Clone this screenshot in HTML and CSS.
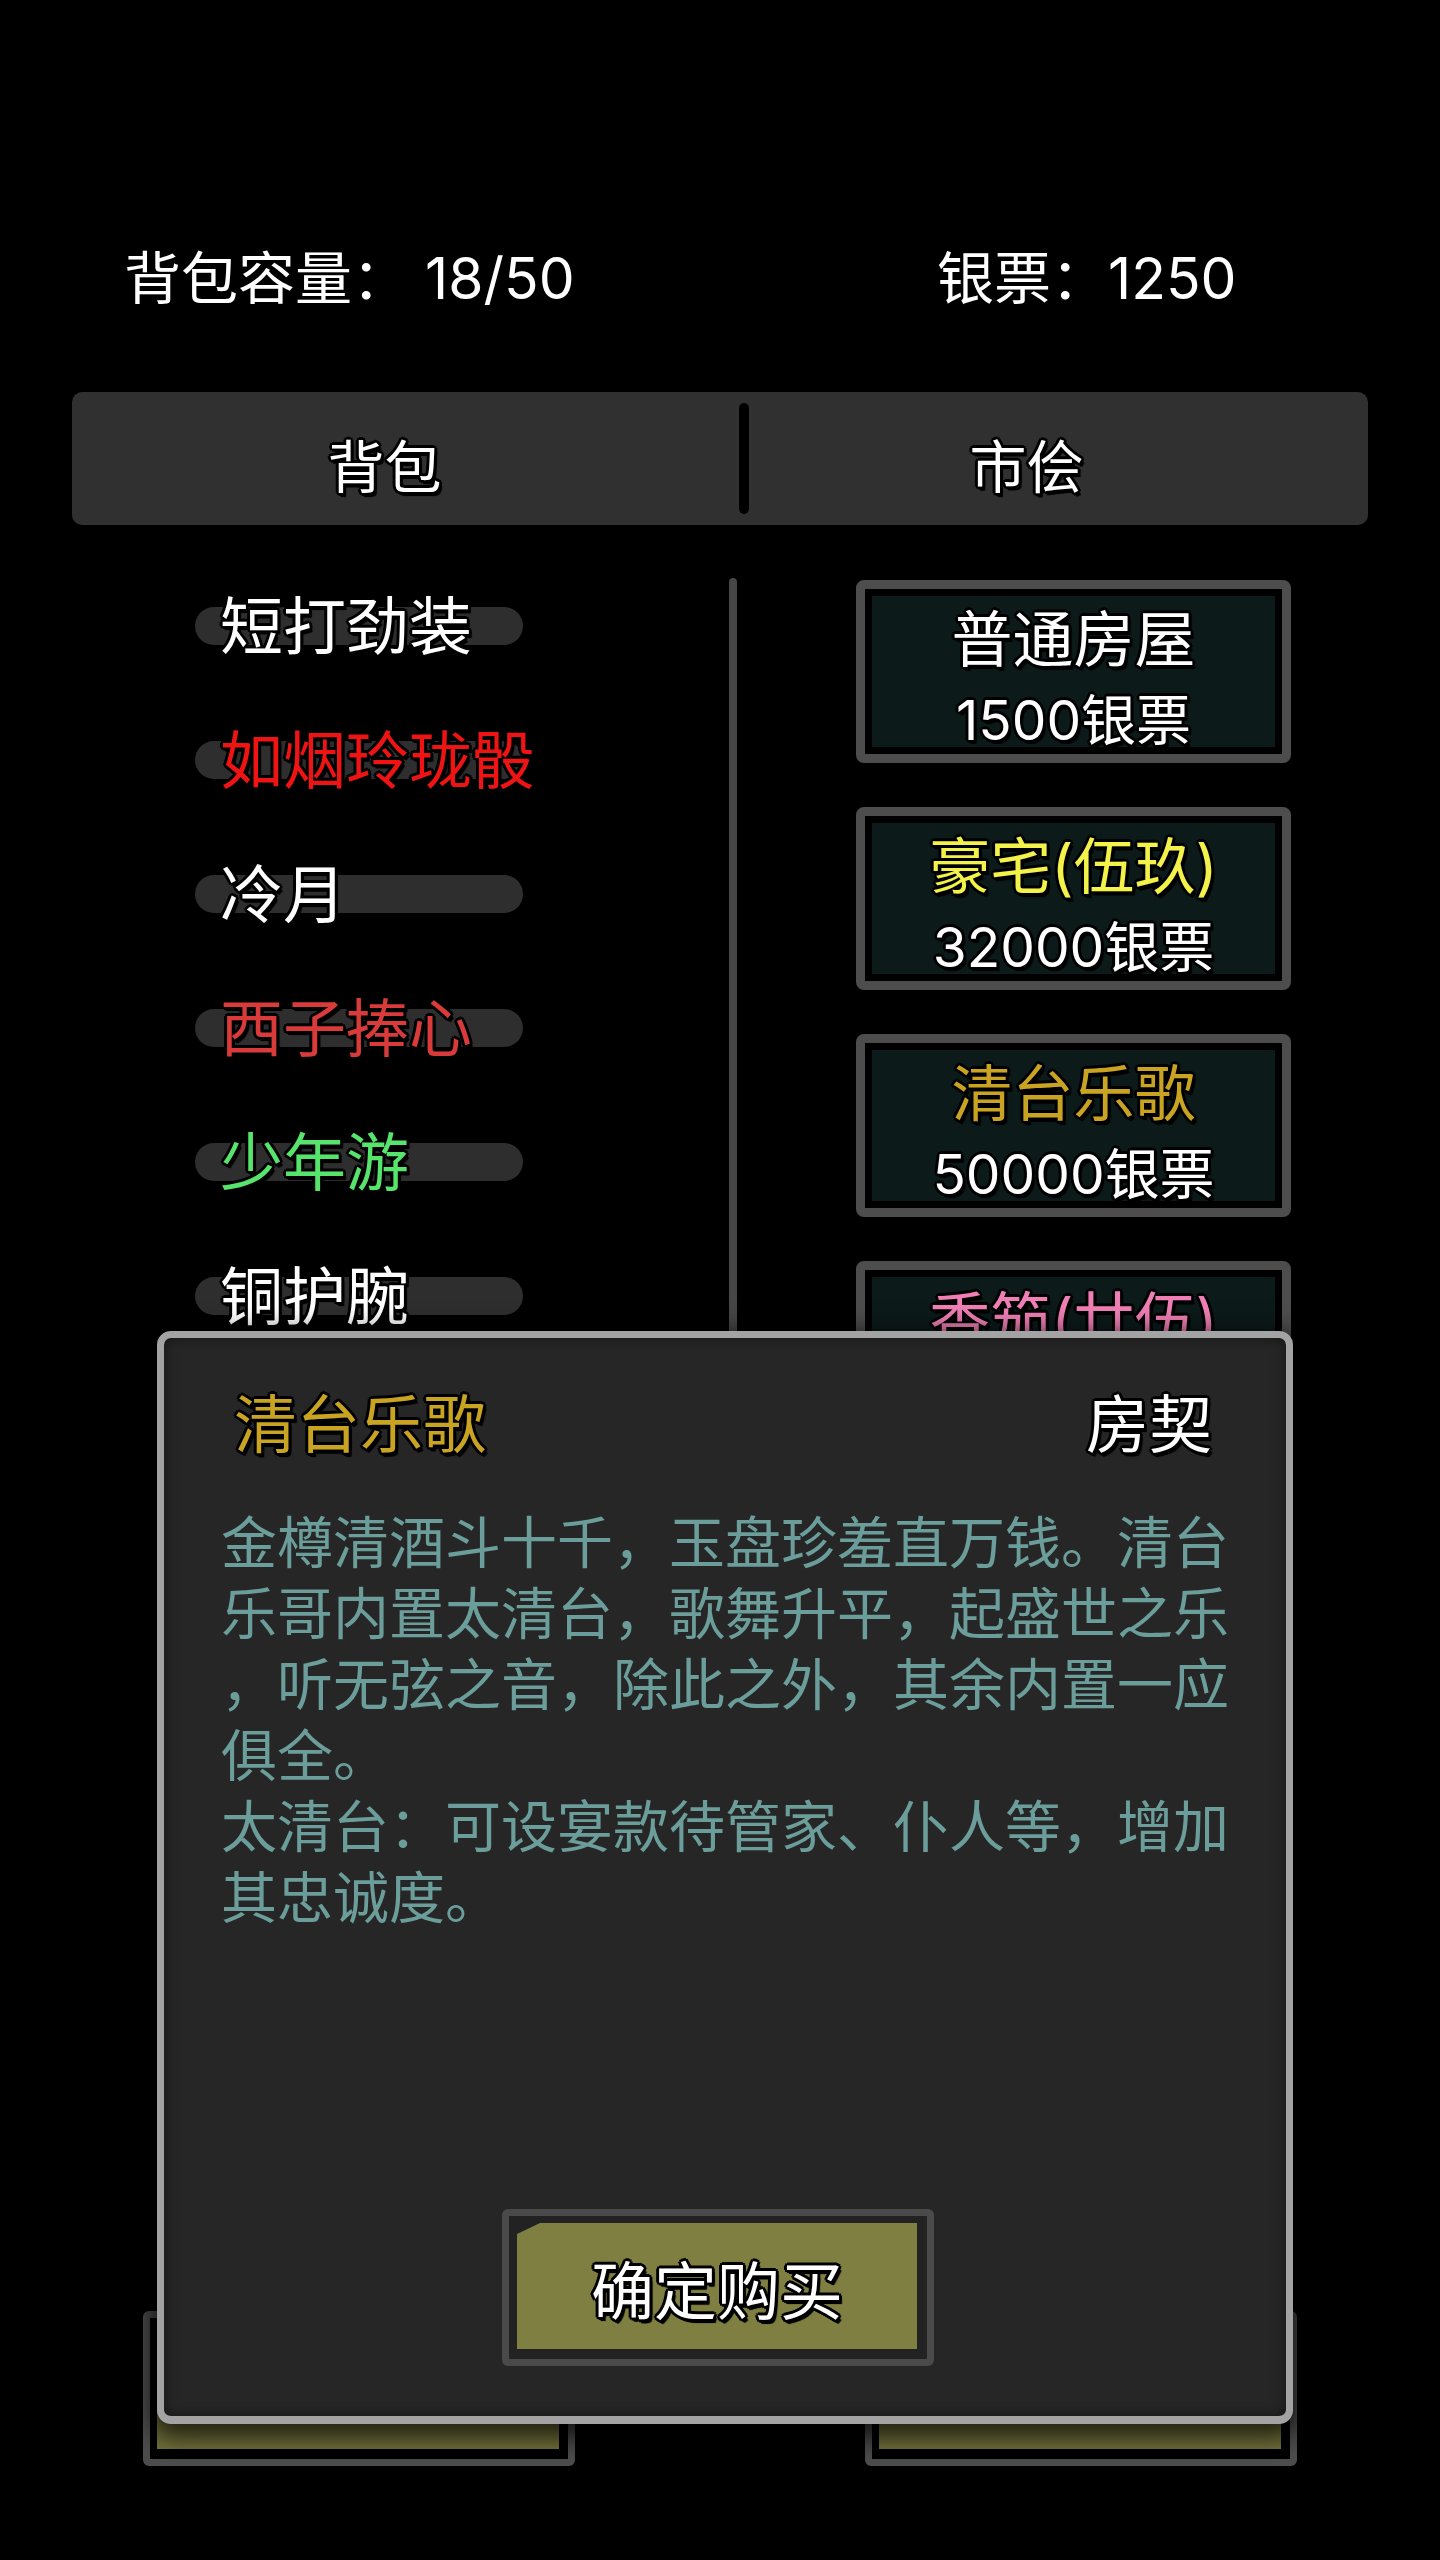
FILE: index.html
```html
<!DOCTYPE html>
<html lang="zh-CN">
<head>
<meta charset="utf-8">
<title>市侩</title>
<link rel="stylesheet" href="styles.css">
</head>
<body>
<div class="screen">
  <div class="stats">
    <div class="stat">背包容量：&nbsp;18/50</div>
    <div class="stat">银票：1250</div>
  </div>

  <div class="tabs">
    <div class="tab tab-left">背包</div>
    <div class="tab-divider"></div>
    <div class="tab tab-right">市侩</div>
  </div>

  <div class="main">
    <div class="bag-list">
      <div class="bag-row"><div class="bag-track"></div><div class="bag-name c-white">短打劲装</div></div>
      <div class="bag-row"><div class="bag-track"></div><div class="bag-name c-red">如烟玲珑骰</div></div>
      <div class="bag-row"><div class="bag-track"></div><div class="bag-name c-white">冷月</div></div>
      <div class="bag-row"><div class="bag-track"></div><div class="bag-name c-rose">西子捧心</div></div>
      <div class="bag-row"><div class="bag-track"></div><div class="bag-name c-green">少年游</div></div>
      <div class="bag-row"><div class="bag-track"></div><div class="bag-name c-white">铜护腕</div></div>
      <div class="bag-row"><div class="bag-track"></div><div class="bag-name c-white">布靴</div></div>
      <div class="bag-row"><div class="bag-track"></div><div class="bag-name c-white">木簪</div></div>
    </div>
    <div class="scroll-divider"></div>
    <div class="shop-list">
      <div class="card">
        <div class="card-title c-white">普通房屋</div>
        <div class="card-price">1500银票</div>
      </div>
      <div class="card">
        <div class="card-title c-yellow">豪宅(伍玖)</div>
        <div class="card-price">32000银票</div>
      </div>
      <div class="card">
        <div class="card-title c-gold">清台乐歌</div>
        <div class="card-price">50000银票</div>
      </div>
      <div class="card">
        <div class="card-title c-pink">香笳(廿伍)</div>
        <div class="card-price">80000银票</div>
      </div>
      <div class="card">
        <div class="card-title c-white">别院</div>
        <div class="card-price">120000银票</div>
      </div>
    </div>
  </div>

  <div class="actions">
    <div class="action-btn"><div class="action-fill"><span class="action-label">出售</span></div></div>
    <div class="action-btn"><div class="action-fill"><span class="action-label">购买</span></div></div>
  </div>

  <div class="modal">
    <div class="modal-head">
      <div class="modal-title c-gold">清台乐歌</div>
      <div class="modal-type">房契</div>
    </div>
    <div class="modal-desc">
      <span class="desc-line">金樽清酒斗十千，玉盘珍羞直万钱。清台</span>
      <span class="desc-line">乐哥内置太清台，歌舞升平，起盛世之乐</span>
      <span class="desc-line">，听无弦之音，除此之外，其余内置一应</span>
      <span class="desc-line">俱全。</span>
      <span class="desc-line">太清台：可设宴款待管家、仆人等，增加</span>
      <span class="desc-line">其忠诚度。</span>
    </div>
    <div class="buy-btn">
      <div class="buy-fill">确定购买</div>
    </div>
  </div>
</div>
</body>
</html>
```

FILE: styles.css
```css
html, body {
  margin: 0;
  padding: 0;
  background: #000;
}

body {
  font-family: Inter, "Noto Sans CJK SC", "Noto Sans", "Liberation Sans", sans-serif;
  color: #fff;
}

.screen {
  position: relative;
  width: 1440px;
  height: 2560px;
  overflow: hidden;
  background: #000;
}

/* ---------- outlined text ---------- */
.tab,
.bag-name,
.card-title,
.card-price,
.modal-title,
.modal-type,
.buy-fill {
  text-shadow:
    -3px 0 0 #000, 3px 0 0 #000, 0 -3px 0 #000, 0 3px 0 #000,
    -2px -2px 0 #000, 2px -2px 0 #000, -2px 2px 0 #000, 2px 2px 0 #000,
    2px 4px 0 #000, 3px 4px 1px #000;
}

.c-white { color: #ffffff; }
.c-red { color: #ee1414; }
.c-rose { color: #d93b3b; }
.c-green { color: #56e46c; }
.c-yellow { color: #f2f24a; }
.c-gold { color: #c9a322; }
.c-pink { color: #f07fb6; }

/* ---------- stats ---------- */
.stats {
  display: grid;
  grid-template-columns: 813px auto;
  padding: 239px 0 0 124px;
  height: 80px;
  font-size: 57px;
  line-height: 80px;
}

.stat {
  white-space: nowrap;
}

/* ---------- tabs ---------- */
.tabs {
  display: grid;
  grid-template-columns: 667px 10px 1fr;
  align-items: center;
  margin: 73px 72px 0 72px;
  height: 133px;
  background: #303030;
  border-radius: 10px;
}

.tab {
  font-size: 57px;
  line-height: 80px;
  text-align: center;
  padding-top: 18px;
}

.tab-left { padding-right: 42px; }
.tab-right { padding-right: 64px; }

.tab-divider {
  height: 111px;
  background: #000;
  border-radius: 5px;
}

/* ---------- main area ---------- */
.main {
  display: flex;
  margin-top: 34px;
  height: 1752px;
  overflow: hidden;
}

.bag-list {
  width: 729px;
  flex: none;
  display: flex;
  flex-direction: column;
}

.bag-row {
  display: grid;
  align-items: center;
  height: 134px;
  flex: none;
}

.bag-track,
.bag-name {
  grid-area: 1 / 1;
}

.bag-track {
  margin-left: 195px;
  width: 328px;
  height: 38px;
  border-radius: 19px;
  background: #2e2e2e;
}

.bag-name {
  margin-left: 220px;
  font-size: 63px;
  line-height: 80px;
  white-space: nowrap;
}

.scroll-divider {
  flex: none;
  width: 8px;
  margin-top: 19px;
  height: 1700px;
  background: #464646;
  border-radius: 4px;
}

.shop-list {
  display: flex;
  flex-direction: column;
  gap: 44px;
  padding: 21px 0 0 119px;
}

.card {
  box-sizing: border-box;
  width: 435px;
  height: 183px;
  flex: none;
  border: 9px solid #4d4d4d;
  border-radius: 8px;
  background: #0c1a1a;
  box-shadow: inset 0 0 0 7px #000;
  padding-top: 11px;
  text-align: center;
  overflow: hidden;
}

.card-title {
  font-size: 61px;
  line-height: 80px;
  white-space: nowrap;
}

.card-price {
  font-size: 55px;
  line-height: 80px;
  color: #fff;
  white-space: nowrap;
}

/* ---------- bottom actions (behind modal) ---------- */
.actions {
  display: flex;
  gap: 290px;
  padding-left: 143px;
}

.action-btn {
  box-sizing: border-box;
  width: 432px;
  height: 155px;
  border: 7px solid #4d4d4d;
  border-radius: 6px;
  background: #000;
  padding: 7px 9px 10px 7px;
}

.action-fill {
  height: 100%;
  background: #74743c;
  display: flex;
  align-items: center;
  justify-content: center;
}

.action-label {
  font-size: 58px;
  color: #fff;
}

/* ---------- modal ---------- */
.modal {
  position: absolute;
  left: 157px;
  top: 1331px;
  width: 1136px;
  height: 1093px;
  box-sizing: border-box;
  border: 7px solid #a3a3a3;
  border-bottom-width: 8px;
  border-radius: 14px;
  background: #262626;
  box-shadow: 0 8px 26px 6px rgba(0, 0, 0, 0.75), inset 0 0 14px rgba(0, 0, 0, 0.45);
  display: flex;
  flex-direction: column;
}

.modal-head {
  display: flex;
  justify-content: space-between;
  padding: 46px 74px 0 70px;
  font-size: 63px;
  line-height: 80px;
}

.modal-type {
  color: #fff;
}

.modal-desc {
  margin-top: 44px;
  padding-left: 57px;
  font-size: 56px;
  line-height: 71px;
  color: #6b9d9a;
}

.desc-line {
  display: block;
  white-space: nowrap;
}

.buy-btn {
  margin: auto 0 50px 338px;
  box-sizing: border-box;
  width: 432px;
  height: 157px;
  border: 7px solid #4a4a4a;
  border-radius: 6px;
  background: #222;
  padding: 7px 10px 10px 8px;
}

.buy-fill {
  height: 100%;
  background: #7f7f42;
  clip-path: polygon(23px 0, 100% 0, 100% 100%, 0 100%, 0 11px);
  display: flex;
  align-items: center;
  justify-content: center;
  font-size: 63px;
  color: #fff;
}
```
